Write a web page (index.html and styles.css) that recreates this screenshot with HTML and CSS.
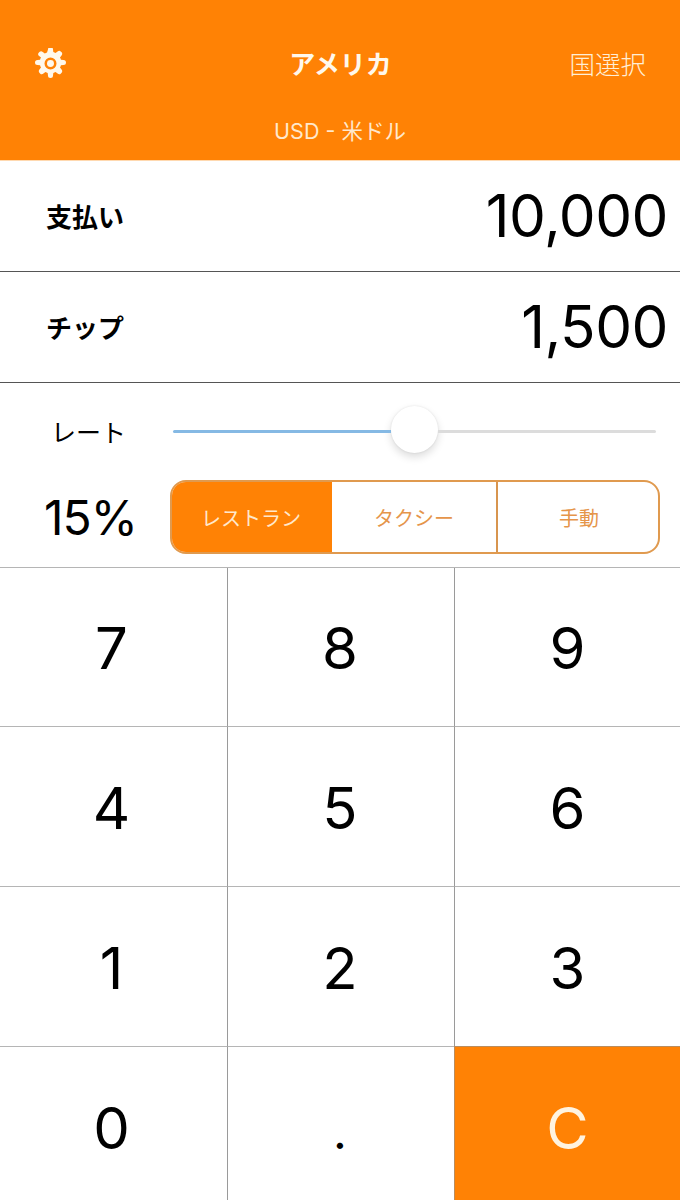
FILE: index.html
```html
<!DOCTYPE html>
<html lang="ja">
<head>
<meta charset="utf-8">
<title>チップ計算</title>
<link rel="stylesheet" href="styles.css">
</head>
<body>
<div class="app">
  <header class="header">
    <div class="nav">
      <div class="nav-side">
        <svg class="gear" viewBox="0 0 32 32" width="31" height="31" aria-hidden="true">
          <path fill="#fff8ec" fill-rule="evenodd" d="M13.4 1.6a2.6 2.6 0 0 1 5.2 0l.3 2.6c.8.2 1.6.5 2.3 1l2.1-1.6a2.6 2.6 0 0 1 3.5 .2l.4.4a2.6 2.6 0 0 1 .2 3.5l-1.600 2.100c.4.700.8 1.500 1 2.300l2.600.300a2.600 2.600 0 0 1 0 5.200l-2.600.300c-.2.800-.6 1.600-1 2.300l1.600 2.100a2.600 2.600 0 0 1-.2 3.500l-.4.400a2.600 2.600 0 0 1-3.500.2l-2.100-1.600c-.7.400-1.500.8-2.300 1l-.3 2.600a2.600 2.600 0 0 1-5.200 0l-.3-2.600c-.8-.2-1.600-.6-2.300-1l-2.100 1.600a2.600 2.600 0 0 1-3.500-.2l-.4-.4a2.600 2.600 0 0 1-.2-3.500l1.600-2.100c-.4-.7-.8-1.500-1-2.300l-2.600-.3a2.600 2.600 0 0 1 0-5.200l2.600-.3c.2-.8.6-1.600 1-2.300L3.900 8.100a2.600 2.600 0 0 1 .2-3.500l.4-.4a2.600 2.600 0 0 1 3.500-.2l2.100 1.600c.7-.5 1.500-.8 2.300-1zM16 9.800a6.200 6.200 0 1 0 0 12.400 6.200 6.200 0 0 0 0-12.400z"/>
          <circle cx="16" cy="16" r="3.600" fill="#fff8ec"/>
        </svg>
      </div>
      <h1 class="title">アメリカ</h1>
      <div class="nav-side nav-right">国選択</div>
    </div>
    <div class="subtitle">USD - 米ドル</div>
  </header>

  <section class="amount-row">
    <span class="amount-label">支払い</span>
    <span class="amount-value">10,000</span>
  </section>
  <section class="amount-row">
    <span class="amount-label">チップ</span>
    <span class="amount-value">1,500</span>
  </section>

  <section class="rate">
    <div class="rate-line">
      <span class="rate-label">レート</span>
      <div class="slider">
        <div class="track track-on"></div>
        <div class="thumb"></div>
        <div class="track track-off"></div>
      </div>
    </div>
    <div class="rate-line rate-line-second">
      <span class="percent">15%</span>
      <div class="segments">
        <div class="segment segment-active">レストラン</div>
        <div class="segment">タクシー</div>
        <div class="segment">手動</div>
      </div>
    </div>
  </section>

  <section class="keypad">
    <div class="key">7</div><div class="key">8</div><div class="key">9</div>
    <div class="key">4</div><div class="key">5</div><div class="key">6</div>
    <div class="key">1</div><div class="key">2</div><div class="key">3</div>
    <div class="key">0</div><div class="key key-dot">.</div><div class="key key-clear">C</div>
  </section>
</div>
</body>
</html>
```
FILE: styles.css
```css
* { box-sizing: border-box; }
html, body { margin: 0; padding: 0; }
body {
  background: #fff;
  color: #000;
  font-family: "Inter", "Noto Sans CJK JP", sans-serif;
}
.app { width: 680px; height: 1200px; overflow: hidden; display: flex; flex-direction: column; }

.header { height: 161px; background: #ff8205; border-bottom: 1px solid #ffd9b0; color: #fff3e0; flex: none; }
.nav { display: flex; align-items: center; justify-content: space-between; height: 64px; margin-top: 31px; padding: 0 34px 0 35px; }
.nav-side { width: 120px; display: flex; align-items: center; height: 32px; }
.nav-right { justify-content: flex-end; margin-bottom: 2px; font-family: "Noto Sans CJK JP", sans-serif; font-size: 25.5px; font-weight: 300; color: #ffeed6; }
.gear { display: block; }
.title { margin: 0; font-family: "Noto Sans CJK JP", sans-serif; font-size: 26px; font-weight: 700; color: #fff8ec; line-height: 1; }
.subtitle { text-align: center; font-size: 21.5px; line-height: 24px; margin-top: 24px; color: #ffe8cc; font-weight: 400; }

.amount-row { height: 111px; flex: none; display: flex; align-items: center; justify-content: space-between; padding: 0 12px 0 46px; border-bottom: 1px solid #555; }
.amount-label { font-family: "Noto Sans CJK JP", sans-serif; font-size: 26px; font-weight: 700; position: relative; top: -1px; }
.amount-value { font-size: 58.5px; font-weight: 400; line-height: 1; letter-spacing: -0.5px; }

.rate { height: 184px; flex: none; display: flex; flex-direction: column; padding: 23px 20px 0 0; }
.rate-line { display: flex; align-items: center; height: 50px; }
.rate-line-second { height: 74px; margin-top: 24px; }
.rate-label { width: 173px; padding-left: 51px; font-family: "Noto Sans CJK JP", sans-serif; font-size: 25px; font-weight: 400; flex: none; }
.slider { flex: 1; margin-right: 4px; margin-bottom: 4px; display: flex; align-items: center; height: 46px; }
.track { height: 3px; position: relative; top: 2px; }
.track-on { width: 218px; background: #85b9e4; border-radius: 2px 0 0 2px; }
.track-off { flex: 1; background: #dcdcdc; border-radius: 0 2px 2px 0; }
.thumb { width: 47px; height: 47px; border-radius: 50%; background: #fff; box-shadow: 0 4px 8px rgba(0,0,0,.14), 0 0 2px rgba(0,0,0,.1); flex: none; }
.percent { width: 170px; padding-left: 44px; font-size: 48px; font-weight: 400; letter-spacing: -1px; flex: none; }
.segments { flex: 1; height: 74px; display: grid; grid-template-columns: 160px 164px 1fr; border: 2px solid #e09a4f; border-radius: 16px; overflow: hidden; }
.segment { display: flex; align-items: center; justify-content: center; font-family: "Noto Sans CJK JP", sans-serif; font-size: 20px; font-weight: 400; color: #e5954a; border-left: 2px solid #d8954f; }
.segment:first-child { border-left: 0; padding-right: 2px; }
.segment:last-child { padding-left: 2px; }
.segment-active { background: #ff8205; color: #ffe8cc; }
.segment-active + .segment { border-left: 0; }

.keypad { flex: 1; display: grid; grid-template-columns: 227px 227px 226px; grid-template-rows: 158px 160px 160px 161px; border-top: 1px solid #b5b5b5; }
.key { display: flex; align-items: center; justify-content: center; padding-top: 2px; font-size: 58px; font-weight: 400; border-left: 1px solid #9a9a9a; border-top: 1px solid #b5b5b5; }
.key:nth-child(3n+1) { border-left: 0; padding-right: 4px; }
.key:nth-child(3n+2) { padding-right: 2px; }
.key:nth-child(-n+3) { border-top: 0; }
.key-dot { font-size: 48px; padding-top: 8px; }
.key-clear { background: #ff8205; color: #fff3e0; border-left-color: #b98d5f; border-top-color: #b98d5f; }
```
